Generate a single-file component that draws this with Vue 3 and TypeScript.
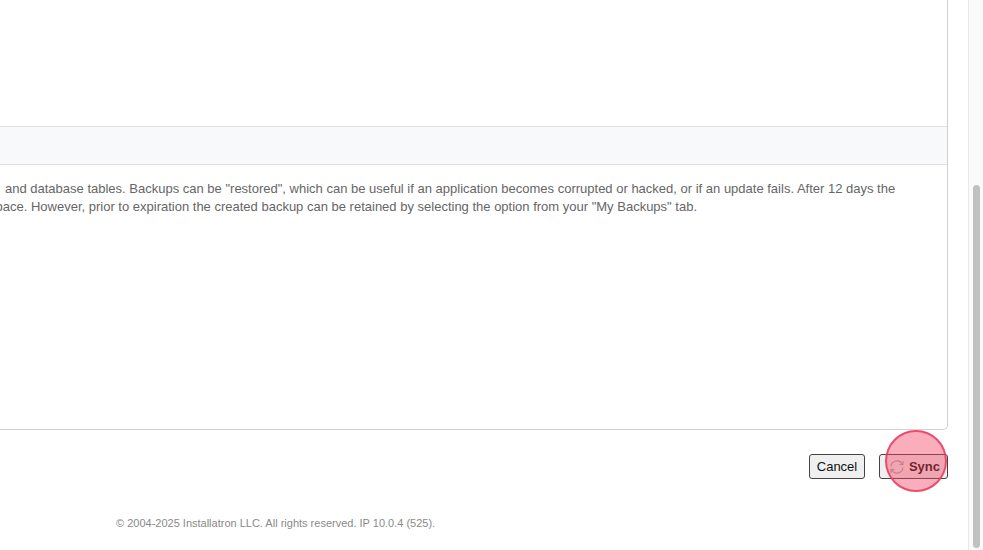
<script setup lang="ts">
const footerText = '© 2004-2025 Installatron LLC. All rights reserved. IP 10.0.4 (525).'
</script>

<template>
  <div class="page">
    <main class="main">
      <section class="card">
        <div class="card__top"></div>
        <div class="card__band"></div>
        <p class="card__text">
          and database tables. Backups can be "restored", which can be useful if an application becomes corrupted or hacked, or if an update fails. After 12 days the<br />
          space. However, prior to expiration the created backup can be retained by selecting the option from your "My Backups" tab.
        </p>
      </section>
      <div class="actions">
        <button class="btn" type="button">Cancel</button>
        <div class="sync-wrap">
          <button class="btn btn--sync" type="button">
            <svg class="sync-icon" viewBox="0 0 16 16" width="16" height="16" fill="none" stroke="#a8a8a8" stroke-width="1.1">
              <path d="M2 7.2A6 6 0 0 1 13.2 5" />
              <path d="M14 2.2v3.3h-3.3" />
              <path d="M14 8.8A6 6 0 0 1 2.8 11" />
              <path d="M2 13.8v-3.3h3.3" />
            </svg>
            Sync
          </button>
          <span class="pulse"></span>
        </div>
      </div>
      <footer class="footer">{{ footerText }}</footer>
    </main>
    <div class="scrollbar">
      <div class="scrollbar__thumb"></div>
    </div>
  </div>
</template>

<style scoped>
.page {
  display: flex;
  width: 983px;
  height: 550px;
  overflow: hidden;
  background: #fff;
  font-family: "Liberation Sans", Arial, sans-serif;
}

.main {
  flex: 1;
  min-width: 0;
  overflow: hidden;
}

.card {
  width: 968px;
  height: 430px;
  margin-left: -20px;
  box-sizing: border-box;
  display: flex;
  flex-direction: column;
  border-right: 1px solid #d0d0d0;
  border-bottom: 1px solid #d0d0d0;
  border-bottom-right-radius: 5px;
}

.card__top {
  height: 126px;
}

.card__band {
  height: 39px;
  box-sizing: border-box;
  background: #f8f9fa;
  border-top: 1px solid #dfe1e3;
  border-bottom: 1px solid #dfe1e3;
}

.card__text {
  margin: 15px 0 0;
  padding-left: 9px;
  text-indent: 16px;
  font-size: 13px;
  line-height: 18.4px;
  color: #666;
  white-space: nowrap;
}

.actions {
  display: flex;
  justify-content: flex-end;
  gap: 14px;
  width: 948px;
  margin-top: 24px;
}

.btn {
  height: 25px;
  padding: 0;
  width: 56px;
  box-sizing: border-box;
  font-family: inherit;
  font-size: 13px;
  color: #111;
  background: #efefef;
  border: 1px solid #444;
  border-radius: 3px;
}

.sync-wrap {
  position: relative;
}

.btn--sync {
  width: 69px;
  display: flex;
  align-items: center;
  justify-content: flex-end;
  gap: 4px;
  padding-right: 7px;
  font-weight: 700;
}

.sync-icon {
  flex: none;
}

.pulse {
  position: absolute;
  left: 6px;
  top: -24px;
  width: 62px;
  height: 62px;
  box-sizing: border-box;
  border-radius: 50%;
  border: 2.5px solid rgba(233, 60, 95, 0.85);
  background: rgba(244, 63, 94, 0.42);
}

.footer {
  margin: 38px 0 0 116px;
  font-size: 11px;
  line-height: 12px;
  color: #8a8a8a;
}

.scrollbar {
  flex: none;
  width: 15px;
  box-sizing: border-box;
  display: flex;
  flex-direction: column;
  justify-content: flex-end;
  padding: 0 3px 2px 4px;
  background: #fafafa;
  border-left: 1px solid #e8e8e8;
}

.scrollbar__thumb {
  height: 363px;
  background: #c1c1c1;
  border-radius: 4px;
}
</style>
